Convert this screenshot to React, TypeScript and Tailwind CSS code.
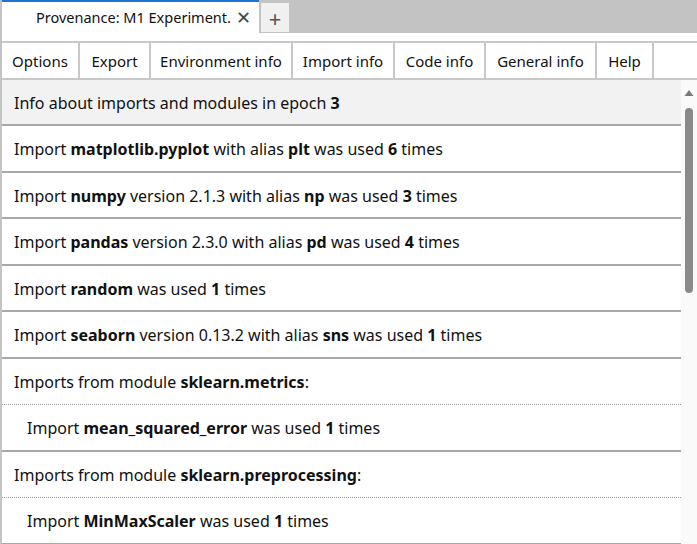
import React from "react";

// Barra de pestañas, barra de botones y la lista de imports
const TOOLBAR = [
  { label: "Options", w: "w-[78px]" },
  { label: "Export", w: "w-[71px]" },
  { label: "Environment info", w: "w-[142px]" },
  { label: "Import info", w: "w-[102px]" },
  { label: "Code info", w: "w-[91px]" },
  { label: "General info", w: "w-[111px]" },
  { label: "Help", w: "w-[57px]" },
];

type Row = { parts: (string | [string])[]; sub?: boolean; dotted?: boolean };

const ROWS: Row[] = [
  { parts: ["Import ", ["matplotlib.pyplot"], " with alias ", ["plt"], " was used ", ["6"], " times"] },
  { parts: ["Import ", ["numpy"], " version 2.1.3 with alias ", ["np"], " was used ", ["3"], " times"] },
  { parts: ["Import ", ["pandas"], " version 2.3.0 with alias ", ["pd"], " was used ", ["4"], " times"] },
  { parts: ["Import ", ["random"], " was used ", ["1"], " times"] },
  { parts: ["Import ", ["seaborn"], " version 0.13.2 with alias ", ["sns"], " was used ", ["1"], " times"] },
  { parts: ["Imports from module ", ["sklearn.metrics"], ":"], dotted: true },
  { parts: ["Import ", ["mean_squared_error"], " was used ", ["1"], " times"], sub: true },
  { parts: ["Imports from module ", ["sklearn.preprocessing"], ":"], dotted: true },
  { parts: ["Import ", ["MinMaxScaler"], " was used ", ["1"], " times"], sub: true },
];

function Text({ parts }: { parts: Row["parts"] }) {
  return (
    <>
      {parts.map((p, i) =>
        typeof p === "string" ? <span key={i}>{p}</span> : <b key={i} className="font-bold">{p[0]}</b>
      )}
    </>
  );
}

export default function App() {
  return (
    <div
      className="w-[697px] h-[544px] overflow-hidden bg-white text-[#111] border-l-2 border-[#c4c4c4] flex flex-col"
      style={{ fontFamily: '"Noto Sans", "Open Sans", sans-serif' }}
    >
      {/* ── PESTAÑAS ── */}
      <div className="h-[33px] bg-[#c3c3c3] flex items-start shrink-0">
        <div className="w-[257px] h-[33px] bg-white border-t-2 border-[#1d72d8] flex items-center pl-[34px] gap-[5px] text-[14.5px]">
          <span>Provenance: M1 Experiment.</span>
          <span className="text-[18px] leading-none text-[#444] -mt-[2px]">✕</span>
        </div>
        <div className="ml-[2px] mt-[3px] w-[28px] h-[29px] bg-[#f0f0f0] flex items-center justify-center text-[#555] text-[22px] leading-none">
          +
        </div>
      </div>

      <div className="h-[8px] shrink-0" />

      {/* ── BOTONES ── */}
      <div className="h-[39px] border-y-2 border-[#c8c8c8] flex shrink-0 text-[15px]">
        {TOOLBAR.map((b) => (
          <div
            key={b.label}
            className={`${b.w} h-full border-r-2 border-[#c8c8c8] flex items-center justify-center pt-[1px]`}
          >
            {b.label}
          </div>
        ))}
      </div>

      {/* ── CONTENIDO ── */}
      <div className="flex flex-1 min-h-0">
        <div className="flex-1 text-[16px]">
          <div className="h-[46px] bg-[#f2f2f2] border-b-2 border-[#a8a8a8] flex items-center pl-[12px] pt-[2px]">
            <span>
              Info about imports and modules in epoch <b className="font-bold">3</b>
            </span>
          </div>
          {ROWS.map((r, i) => (
            <div
              key={i}
              className={`h-[46.5px] flex items-center pt-[2px] ${r.sub ? "pl-[25px]" : "pl-[12px]"} ${
                r.dotted ? "border-b border-dotted border-[#999]" : "border-b-2 border-[#a8a8a8]"
              }`}
            >
              <span>
                <Text parts={r.parts} />
              </span>
            </div>
          ))}
        </div>

        {/* barra de scroll */}
        <div className="w-[16px] bg-[#fafafa] flex flex-col items-center shrink-0">
          <svg width="10" height="8" viewBox="0 0 10 8" className="mt-[9px]">
            <polygon points="5,1 9.5,7 0.5,7" fill="#7a7a7a" />
          </svg>
          <div className="mt-[11px] w-[8px] h-[185px] rounded-full bg-[#8a8a8a]" />
        </div>
      </div>
    </div>
  );
}
